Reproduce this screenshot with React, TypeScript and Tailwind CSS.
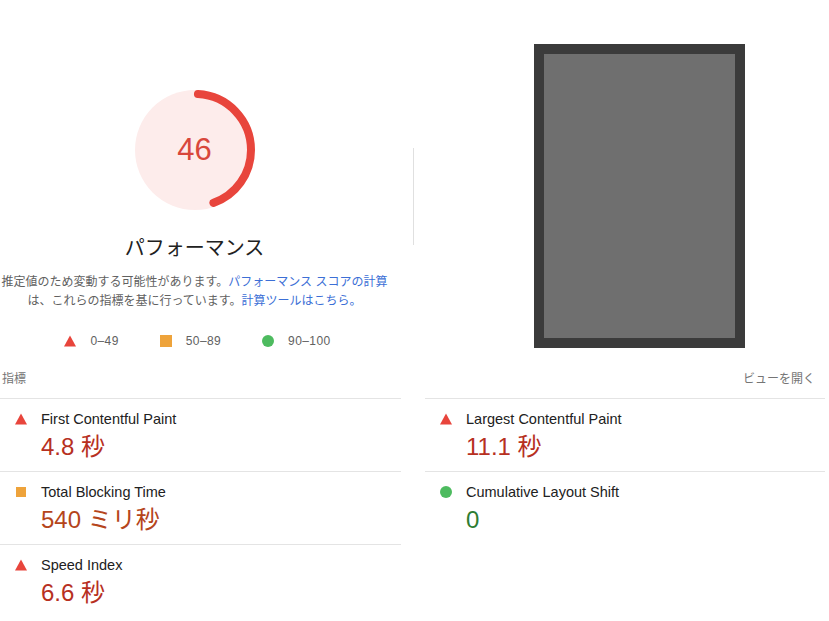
import React from 'react'

type Rating = 'fail' | 'average' | 'pass'

interface Metric {
  label: string
  value: string
  rating: Rating
}

const metricsLeft: Metric[] = [
  { label: 'First Contentful Paint', value: '4.8 秒', rating: 'fail' },
  { label: 'Total Blocking Time', value: '540 ミリ秒', rating: 'average' },
  { label: 'Speed Index', value: '6.6 秒', rating: 'fail' },
]

const metricsRight: Metric[] = [
  { label: 'Largest Contentful Paint', value: '11.1 秒', rating: 'fail' },
  { label: 'Cumulative Layout Shift', value: '0', rating: 'pass' },
]

const valueColor: Record<Rating, string> = {
  fail: 'text-[#b7301f]',
  average: 'text-[#b5451b]',
  pass: 'text-[#2e7d32]',
}

function RatingIcon({ rating }: { rating: Rating }) {
  if (rating === 'fail') {
    return (
      <svg width="12" height="12" viewBox="0 0 12 12" className="shrink-0">
        <polygon points="6,0.5 12,11.5 0,11.5" fill="#e8453c" />
      </svg>
    )
  }
  if (rating === 'average') {
    return <span className="block w-[10px] h-[10px] mx-px bg-[#eea33b] shrink-0" />
  }
  return <span className="block w-[12px] h-[12px] rounded-full bg-[#4dbb5f] shrink-0" />
}

function Gauge({ score }: { score: number }) {
  const r = 56
  const c = 2 * Math.PI * r
  const len = (score / 100) * c
  return (
    <div className="relative w-[120px] h-[120px]">
      <svg width="120" height="120" viewBox="0 0 120 120" className="-rotate-90">
        <circle cx="60" cy="60" r="60" fill="#fdeceb" />
        <circle
          cx="60"
          cy="60"
          r={r}
          fill="none"
          stroke="#e8453c"
          strokeWidth="8"
          strokeLinecap="round"
          strokeDasharray={`${len - 8} ${c}`}
          strokeDashoffset={-3}
        />
      </svg>
      <div className="absolute inset-0 flex items-center justify-center text-[31px] text-[#d8473b]">{score}</div>
    </div>
  )
}

function MetricCell({ metric, last }: { metric: Metric; last?: boolean }) {
  return (
    <div className={`pl-[15px] pt-[10px] pb-[8px] ${last ? '' : 'border-b border-[#e4e4e4]'}`}>
      <div className="flex items-center gap-[14px] h-[20px]">
        <RatingIcon rating={metric.rating} />
        <span className="text-[14.5px] leading-[20px] text-[#212121]">{metric.label}</span>
      </div>
      <div className={`mt-[2px] pl-[26px] text-[24px] leading-[32px] ${valueColor[metric.rating]}`}>{metric.value}</div>
    </div>
  )
}

export default function App() {
  return (
    <div
      className="w-[829px] h-[621px] bg-white overflow-hidden"
      style={{ fontFamily: '"Liberation Sans", "Noto Sans CJK JP", sans-serif' }}
    >
      {/* Score + screenshot */}
      <div className="flex">
        <div className="w-[389px] flex flex-col items-center pt-[90px]">
          <Gauge score={46} />
          <h2 className="mt-[24px] text-[20px] leading-[28px] text-[#212121]">パフォーマンス</h2>
          <p className="mt-[11px] text-[12px] leading-[19px] text-[#616161] text-center whitespace-nowrap">
            推定値のため変動する可能性があります。<span className="text-[#3c6fd6]">パフォーマンス スコアの計算</span>
            <br />
            は、これらの指標を基に行っています。<span className="text-[#3c6fd6]">計算ツールはこちら。</span>
          </p>
          <div className="mt-[21px] ml-[6px] flex items-center gap-[41px] text-[12px] leading-[18px] text-[#616161] tracking-[0.4px]">
            <div className="flex items-center gap-[14px]">
              <RatingIcon rating="fail" />
              <span>0–49</span>
            </div>
            <div className="flex items-center gap-[14px]">
              <span className="block w-[12px] h-[12px] bg-[#eea33b]" />
              <span>50–89</span>
            </div>
            <div className="flex items-center gap-[14px]">
              <RatingIcon rating="pass" />
              <span>90–100</span>
            </div>
          </div>
        </div>
        <div className="w-px h-[97px] bg-[#e0e0e0] mt-[148px] ml-[24px]" />
        <div className="ml-[120px] mt-[44px] w-[211px] h-[304px] border-[10px] border-[#3b3b3b] bg-[#6f6f6f]" />
      </div>

      {/* Metrics */}
      <div className="mt-[20px] grid grid-cols-[401px_400px] gap-x-[24px]">
        <div className="pl-[2px] pb-[10px] text-[12px] leading-[18px] text-[#757575] border-b border-[#e4e4e4]">指標</div>
        <div className="pr-[10px] pb-[10px] text-[12px] leading-[18px] text-[#757575] text-right border-b border-[#e4e4e4]">
          ビューを開く
        </div>
        <div className="flex flex-col">
          {metricsLeft.map((m, i) => (
            <MetricCell key={m.label} metric={m} last={i === metricsLeft.length - 1} />
          ))}
        </div>
        <div className="flex flex-col">
          {metricsRight.map((m, i) => (
            <MetricCell key={m.label} metric={m} last={i === metricsRight.length - 1} />
          ))}
        </div>
      </div>
    </div>
  )
}
